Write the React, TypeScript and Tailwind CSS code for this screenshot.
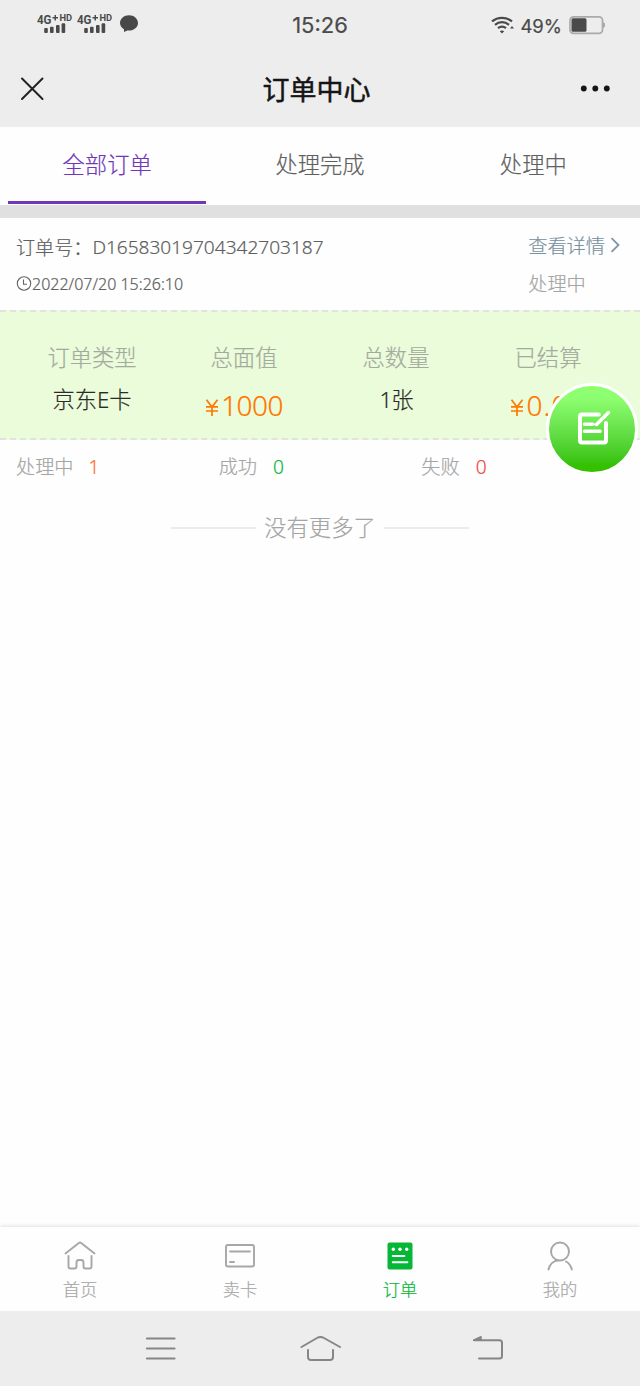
import React from "react";

function Signal() {
  return (
    <svg width="36" height="22" viewBox="0 0 36 22" fill="#4a4a4a">
      <text x="0" y="10.6" fontSize="12.5" fontWeight="700" fontFamily="Roboto, sans-serif" textLength="14.5" lengthAdjust="spacingAndGlyphs">4G</text>
      <path d="M15.500 4h2v-2h1.500v2h2v1.500h-2v2h-1.500v-2h-2z" />
      <text x="22.4" y="7.8" fontSize="8.6" fontWeight="700" fontFamily="Roboto, sans-serif" textLength="12.6" lengthAdjust="spacingAndGlyphs">HD</text>
      <rect x="7.2" y="15" width="3.6" height="5" rx="1" />
      <rect x="13" y="13.7" width="3.6" height="6.3" rx="1" />
      <rect x="19" y="12" width="3.6" height="8" rx="1" />
      <rect x="24.6" y="10.3" width="3.6" height="9.7" rx="1" />
    </svg>
  );
}

function StatusBar() {
  return (
    <div className="grid h-[50px] grid-cols-[1fr_auto_1fr] items-center text-[#4a4a4a]">
      <div className="flex items-center gap-1 pb-[2px] pl-[37px]">
        <Signal />
        <Signal />
        <svg className="ml-[2px]" width="20" height="20" viewBox="0 0 20 20" fill="#484848">
          <path d="M10 1.3C5 1.3 1 4.7 1 9c0 2.500 1.500 4.800 4 6.200V18l3.300-1.500c.6.1 1.100.1 1.700.1 5 0 9-3.400 9-7.600s-4-7.700-9-7.700z" />
        </svg>
      </div>
      <span className="font-[Inter,sans-serif] text-[22px] leading-[30px] font-normal">15:26</span>
      <div className="flex items-center justify-end pr-[34px]">
        <svg width="24" height="18" viewBox="0 0 24 18" fill="none" stroke="#4a4a4a" strokeWidth="2.200">
          <path d="M1 5.400C6.700.6 15.300.6 21 5.400M4 8.800c4.200-3.500 9.800-3.500 14 0M7 12.200c2.400-2 5.600-2 8 0" />
          <path d="M11 17.400 8.800 15.300c1.200-1.200 3.200-1.200 4.400 0z" fill="#4a4a4a" stroke="none" />
          <path d="m19 12.500 2-2.500 2 2.500z" fill="#4a4a4a" stroke="none" />
        </svg>
        <span className="ml-[5px] pt-px font-[Inter,sans-serif] text-[18.500px] leading-[26px] font-normal">49%</span>
        <svg className="ml-[7px]" width="37" height="20" viewBox="0 0 37 20">
          <rect x="1" y="1.800" width="32.500" height="16.500" rx="3.500" fill="none" stroke="#aaa" strokeWidth="1.700" />
          <rect x="2.500" y="3.300" width="15" height="13.500" rx="1.500" fill="#4a4a4a" />
          <path d="M34.500 7.500c1.500 0 1.500 5 0 5z" fill="#aaa" stroke="#aaa" />
        </svg>
      </div>
    </div>
  );
}

function Header() {
  return (
    <div className="grid h-[77px] grid-cols-[1fr_auto_1fr] items-center">
      <svg className="ml-5" width="24" height="24" viewBox="0 0 24 24" stroke="#222" strokeWidth="2" strokeLinecap="round">
        <path d="M2 1.500l20.500 20.500M22.500 1.500L2 22" />
      </svg>
      <h1 className="mr-[7px] pt-[3px] text-[27px] leading-[40px] font-normal text-[#151515] [-webkit-text-stroke:0.5px_#151515]">订单中心</h1>
      <svg className="mr-[29px] justify-self-end" width="32" height="8" viewBox="0 0 32 8" fill="#151515">
        <circle cx="4.800" cy="3.500" r="2.900" />
        <circle cx="16.300" cy="3.500" r="2.900" />
        <circle cx="27.800" cy="3.500" r="2.900" />
      </svg>
    </div>
  );
}

function Tabs() {
  const base = "flex h-full items-center justify-center border-b-[3px] pt-[2px]";
  return (
    <div className="h-[78px] bg-[#fefefe] text-[22.300px] text-[#606060]">
      <div className="grid h-[77px] grid-cols-3 px-0 leading-[32px]">
        <div className="pr-[7px] pl-2">
          <div className={base + " border-[#7038b8] text-[#7038b8]"}>全部订单</div>
        </div>
        <div className="px-2">
          <div className={base + " border-transparent"}>处理完成</div>
        </div>
        <div className="px-2">
          <div className={base + " border-transparent"}>处理中</div>
        </div>
      </div>
    </div>
  );
}

function OrderHead() {
  return (
    <div className="flex h-[92px] justify-between bg-[#fefefe] pr-5 pl-4 text-[#606060]">
      <div>
        <div className="mt-[14px] flex h-[30px] items-center text-[19.100px]">
          <span className="pt-[2px]">订单号：</span>
          <span className="pt-px tracking-[-0.020px]">D16583019704342703187</span>
        </div>
        <div className="mt-[10px] flex h-6 items-center text-[16px]">
          <svg width="16" height="16" viewBox="0 0 16 16" fill="none" stroke="#636363" strokeWidth="1.100">
            <circle cx="8" cy="7.500" r="6.700" />
            <path d="M7.500 3.500v4.800H11" />
          </svg>
          <span className="tracking-[0.010px]">2022/07/20 15:26:10</span>
        </div>
      </div>
      <div className="text-[19.200px] leading-[30px]">
        <div className="mt-[13px] flex items-center text-[#7891a0]">
          查看详情
          <svg className="mb-[2px] ml-[5px]" width="10" height="16" viewBox="0 0 10 16" fill="none" stroke="#7f98a3" strokeWidth="1.800">
            <path d="M1.500 1.200 8.500 8l-7 6.800" />
          </svg>
        </div>
        <div className="mt-[8px] text-[#a5a5a5]">处理中</div>
      </div>
    </div>
  );
}

function Money({ value, wide }: { value: string; wide?: boolean }) {
  return (
    <div className="mt-[12px] flex h-[38px] items-baseline text-[#ff7600]">
      <svg className="mr-[2px]" width="14" height="17" viewBox="0 0 14 17" fill="none" stroke="#ff7800" strokeWidth="1.700">
        <path d="M1.500.8 7 8 12.500.8M1 7.900h12M1 12h12M7 8v9" />
      </svg>
      <span className={"text-[28px] leading-[38px] " + (wide ? "tracking-[1.100px]" : "tracking-[-0.600px]")}>{value}</span>
    </div>
  );
}

function Stat({ label, children }: { label: string; children: React.ReactNode }) {
  return (
    <div className="flex flex-col items-center pt-[30px]">
      <div className="h-8 text-[22.300px] leading-8 text-[#a5aa9f]">{label}</div>
      {children}
    </div>
  );
}

function Summary() {
  return (
    <div className="h-[130px] border-y-2 border-dashed border-[#e1e3e2] bg-[#eafcd9]">
      <div className="grid grid-cols-4 px-4 text-[#2b2b2b]">
        <Stat label="订单类型">
          <div className="mt-[10px] text-[22.300px] leading-8">京东E卡</div>
        </Stat>
        <Stat label="总面值">
          <Money value="1000" />
        </Stat>
        <Stat label="总数量">
          <div className="mt-[10px] text-[22.300px] leading-8 tracking-[-1px]">1张</div>
        </Stat>
        <Stat label="已结算">
          <Money value="0.00" wide />
        </Stat>
      </div>
    </div>
  );
}

function Counts() {
  return (
    <div className="grid h-[54px] grid-cols-3 px-4 text-[19.200px] leading-[54px] text-[#a5a5a5]">
      <div>处理中<span className="ml-[15px] text-[#fa7825]">1</span></div>
      <div>成功<span className="ml-4 text-[#08b83c]">0</span></div>
      <div>失败<span className="ml-4 text-[#f04640]">0</span></div>
    </div>
  );
}

function FloatingEdit() {
  return (
    <button
      aria-label="edit"
      className="absolute top-[383px] left-[546px] flex h-[92px] w-[92px] items-center justify-center rounded-full border-[3px] border-white bg-linear-to-b from-[#8dff70] from-[14%] to-[#35c100] to-[92%]"
    >
      <svg className="mt-[-2px] ml-[4px]" width="36" height="36" viewBox="0 0 36 36" fill="none" stroke="#fff" strokeWidth="4" strokeLinecap="round" strokeLinejoin="round">
        <path d="M22.800 4.500H6q-2 0-2 2v24q0 2 2 2h22q2 0 2-2V13" />
        <path d="M20.500 14.500 32.500 2.500M8.500 14.300h8.500M8.500 21.300H24" strokeWidth="3.500" />
      </svg>
    </button>
  );
}

const tabIcons = [
  {
    name: "首页",
    color: "text-[#a7a7a7]",
    icon: <path d="M1.500 13.500 14.800 3q1.200-1 2.400 0l13.300 10.500M4.500 16v10.500q0 2 2 2h4q2 0 2-2v-4q0-2.500 2.500-2.500h2q2.500 0 2.500 2.500v4q0 2 2 2h4q2 0 2-2V16" />,
  },
  {
    name: "卖卡",
    color: "text-[#a7a7a7]",
    icon: (
      <>
        <rect x="2" y="5" width="28" height="21.500" rx="2" />
        <path d="M6 11.500h20M6 22h4" />
      </>
    ),
  },
  {
    name: "订单",
    color: "text-[#05b637]",
    icon: (
      <>
        <rect x="3.500" y="2.500" width="25" height="27" rx="2" fill="currentColor" stroke="none" />
        <g fill="#fff" stroke="none">
          <circle cx="9.300" cy="9.200" r="1.700" />
          <circle cx="16" cy="9.200" r="1.700" />
          <circle cx="22.700" cy="9.200" r="1.700" />
        </g>
        <path d="M8.800 16h11.500M8.800 22.300h14.500" stroke="#fff" strokeWidth="2.100" />
      </>
    ),
  },
  {
    name: "我的",
    color: "text-[#a7a7a7]",
    icon: (
      <>
        <circle cx="16" cy="11.500" r="9" />
        <path d="M4.500 29.500c1-5 5-9 9.500-9M22 21.500c3 1.600 5 4.500 5.800 8" />
      </>
    ),
  },
];

function BottomTabs() {
  return (
    <div className="grid h-[84px] grid-cols-4 bg-[#fefefe] shadow-[0_-1px_4px_rgba(0,0,0,0.12)]">
      {tabIcons.map((tab) => (
        <div key={tab.name} className={"flex flex-col items-center pt-[13px] " + tab.color}>
          <svg width="32" height="32" viewBox="0 0 32 32" fill="none" stroke="currentColor" strokeWidth="1.900" strokeLinecap="round" strokeLinejoin="round">
            {tab.icon}
          </svg>
          <div className="mt-[6px] text-[17.300px] leading-[24px]">{tab.name}</div>
        </div>
      ))}
    </div>
  );
}

function SystemNav() {
  return (
    <div className="flex h-[75px] items-center bg-[#ededed] pl-[145px]">
      <svg width="32" height="32" viewBox="0 0 32 32" stroke="#868686" strokeWidth="2.200" strokeLinecap="round">
        <path d="M2 5.500h27.500M2 15.500h27.500M2 25.500h27.500" />
      </svg>
      <svg className="ml-[122px]" width="44" height="32" viewBox="0 0 44 32" fill="none" stroke="#868686" strokeWidth="2" strokeLinecap="round" strokeLinejoin="round">
        <path d="M2.500 14 18 5q3.500-2 7 0l16 9M9 17v7q0 3 3 3h19q3 0 3-3V17" />
      </svg>
      <svg className="ml-[129px]" width="34" height="32" viewBox="0 0 34 32" fill="none" stroke="#868686" strokeWidth="2" strokeLinecap="round" strokeLinejoin="round">
        <path d="M2 7.300h25.500q2.500 0 2.500 2.500v13.200q0 2.500-2.500 2.500H7" />
        <path d="m2 7 7-3.200V7z" fill="#868686" strokeWidth="1.500" />
      </svg>
    </div>
  );
}

export default function App() {
  return (
    <div className="relative flex h-[1386px] w-[640px] flex-col overflow-hidden bg-[#fefefe] font-['Noto_Sans','Noto_Sans_CJK_SC',sans-serif] font-light [-webkit-text-stroke:0.2px]">
      <div className="bg-[#ededed]">
        <StatusBar />
        <Header />
      </div>
      <Tabs />
      <div className="h-[13px] bg-[#e0e0e0]" />
      <OrderHead />
      <Summary />
      <Counts />
      <div className="mt-[18px] flex items-center justify-center text-[22.300px] leading-8 text-[#a5a5a5]">
        <span className="h-[1.500px] w-[85px] bg-[#ebebeb]" />
        <span className="mx-2">没有更多了</span>
        <span className="h-[1.500px] w-[85px] bg-[#ebebeb]" />
      </div>
      <div className="flex-1" />
      <BottomTabs />
      <SystemNav />
      <FloatingEdit />
    </div>
  );
}
